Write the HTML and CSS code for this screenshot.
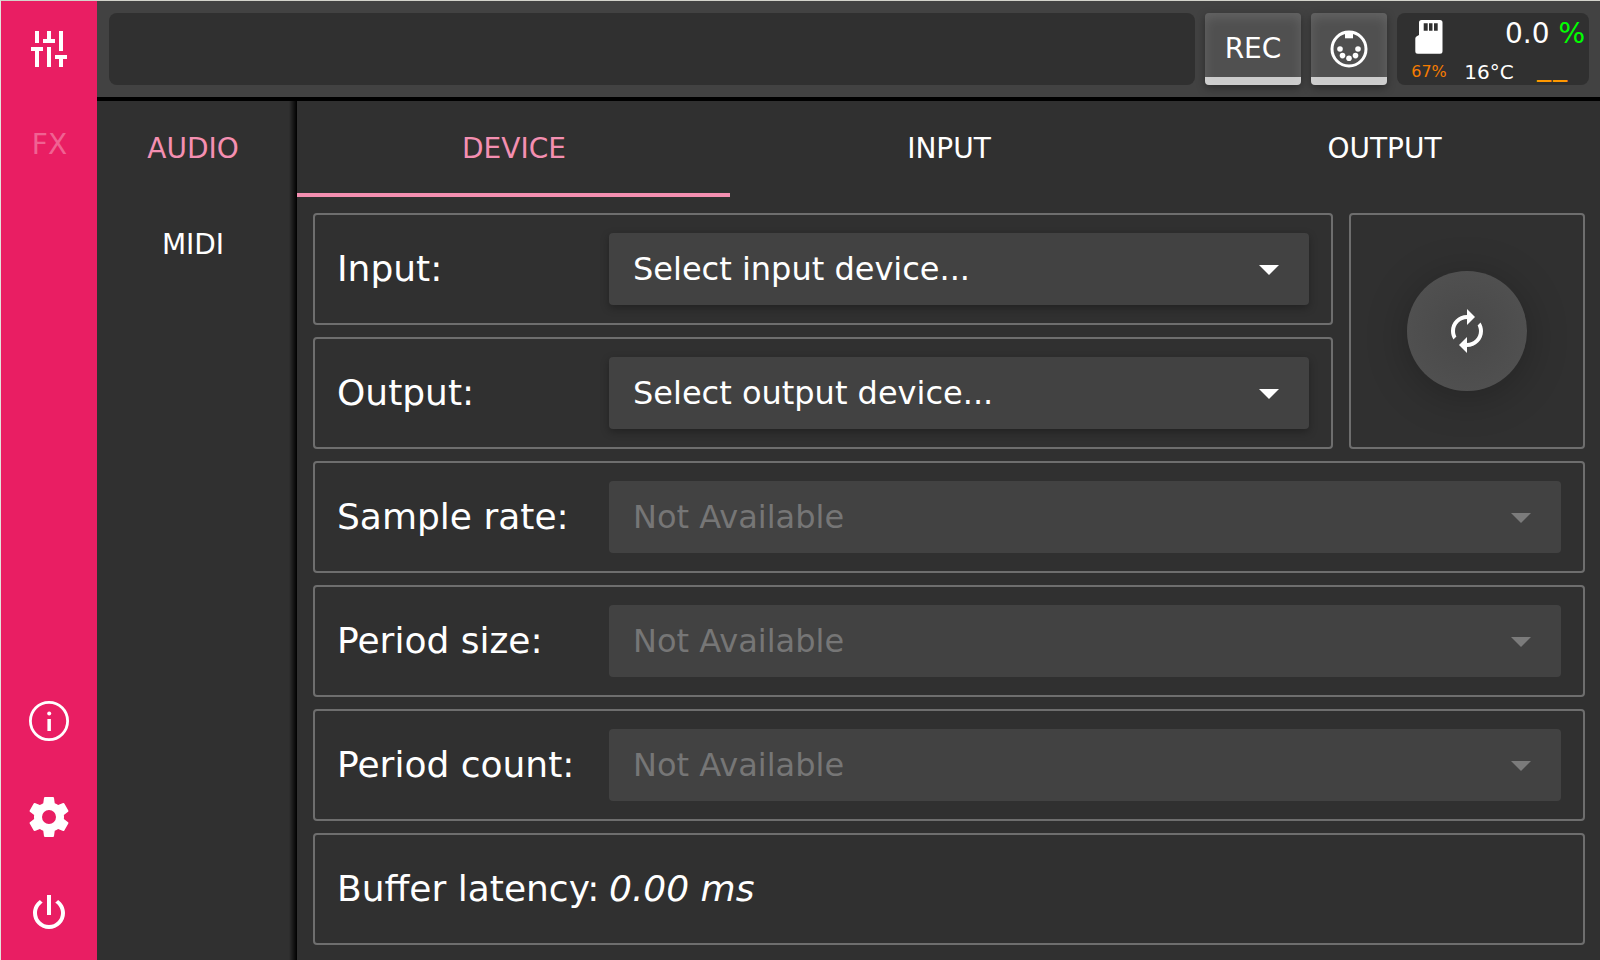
FILE: index.html
```html
<!DOCTYPE html>
<html lang="en">
<head>
<meta charset="utf-8">
<title>Audio settings</title>
<link rel="stylesheet" href="styles.css">
</head>
<body>
<div class="app">
  <nav class="rail">
    <button class="rail-item"><svg class="icon" viewBox="0 0 48 48"><path d="M10 6h4v12h-4zM22 6h4v8h4v4H18v-4h4zM34 6h4v20h-4zM6 22h12v4h-4v16h-4V26H6zM22 22h4v20h-4zM30 30h12v4h-4v8h-4v-8h-4z"/></svg></button>
    <button class="rail-item fx">FX</button>
    <div class="spacer"></div>
    <button class="rail-item"><svg class="icon" viewBox="0 0 48 48"><circle cx="24" cy="24" r="18.6" fill="none" stroke="#fff" stroke-width="2.8"/><circle cx="24.2" cy="16.5" r="2"/><path d="M22.4 22h3.5v12h-3.5z"/></svg></button>
    <button class="rail-item"><svg class="icon" viewBox="0 0 24 24"><path d="M19.43 12.98c.04-.32.07-.64.07-.98s-.03-.66-.07-.98l2.11-1.65c.19-.15.24-.42.12-.64l-2-3.46c-.12-.22-.39-.3-.61-.22l-2.49 1c-.52-.4-1.08-.73-1.69-.98l-.38-2.65C14.46 2.18 14.25 2 14 2h-4c-.25 0-.46.18-.49.42l-.38 2.65c-.61.25-1.17.59-1.69.98l-2.49-1c-.23-.09-.49 0-.61.22l-2 3.46c-.13.22-.07.49.12.64l2.11 1.65c-.04.32-.07.65-.07.98s.03.66.07.98l-2.11 1.65c-.19.15-.24.42-.12.64l2 3.46c.12.22.39.3.61.22l2.49-1c.52.4 1.08.73 1.69.98l.38 2.65c.03.24.24.42.49.42h4c.25 0 .46-.18.49-.42l.38-2.65c.61-.25 1.17-.59 1.69-.98l2.49 1c.23.09.49 0 .61-.22l2-3.46c.12-.22.07-.49-.12-.64l-2.11-1.65zM12 15.5a3.5 3.5 0 1 1 0-7 3.5 3.5 0 0 1 0 7z"/></svg></button>
    <button class="rail-item"><svg class="icon" viewBox="0 0 24 24"><path d="M16.56 5.44l-1.45 1.45C16.84 7.94 18 9.83 18 12a6 6 0 0 1-12 0c0-2.17 1.16-4.06 2.88-5.12L7.44 5.44C5.36 6.88 4 9.28 4 12a8 8 0 0 0 16 0c0-2.72-1.36-5.12-3.44-6.56M13 3h-2v10h2"/></svg></button>
  </nav>
  <div class="main">
    <header class="topbar">
      <div class="display"></div>
      <button class="key rec">REC</button>
      <button class="key midi"><svg class="icon" viewBox="0 0 48 48"><circle cx="24" cy="24" r="17" fill="none" stroke="#fff" stroke-width="3"/><path d="M20 7h8v6.3h-8z"/><circle cx="15" cy="24" r="2.8"/><circle cx="33" cy="24" r="2.8"/><circle cx="17.5" cy="30.6" r="2.8"/><circle cx="30.5" cy="30.6" r="2.8"/><circle cx="24" cy="33.3" r="2.8"/></svg></button>
      <div class="status">
        <div class="status-top">
          <svg class="sd" viewBox="0 0 28 34"><path fill-rule="evenodd" d="M6.500 0h18.500a2.500 2.500 0 0 1 2.500 2.500v28.700a2.500 2.500 0 0 1-2.500 2.500H2.800a2.500 2.500 0 0 1-2.500-2.500V18.500q0-1.500 1.500-2.200L4 15V2.500A2.500 2.500 0 0 1 6.500 0zM8.700 3.300v7.400h4V3.300zM14 3.300v7.400h3.500V3.300zM19 3.300v7.400h3.700V3.300z"/></svg>
          <div class="cpu">0.0 <span class="ok">%</span></div>
        </div>
        <div class="status-bottom">
          <span class="disk">67%</span><span class="temp">16°C</span><span class="xruns">__</span>
        </div>
      </div>
    </header>
    <div class="body">
      <nav class="side">
        <button class="side-item active">AUDIO</button>
        <button class="side-item">MIDI</button>
      </nav>
      <section class="page">
        <div class="tabs">
          <button class="tab active">DEVICE</button>
          <button class="tab">INPUT</button>
          <button class="tab">OUTPUT</button>
        </div>
        <div class="content">
          <div class="devices">
            <div class="stack">
              <div class="card"><label class="label">Input:</label><div class="combo">Select input device...<svg class="arrow" viewBox="0 0 20 10"><path d="M0 0h20L10 10z"/></svg></div></div>
              <div class="card"><label class="label">Output:</label><div class="combo">Select output device...<svg class="arrow" viewBox="0 0 20 10"><path d="M0 0h20L10 10z"/></svg></div></div>
            </div>
            <div class="card refresh-card"><button class="refresh"><svg class="icon" viewBox="0 0 24 24"><path d="M12 6v3l4-4-4-4v3c-4.42 0-8 3.58-8 8 0 1.57.46 3.03 1.24 4.26L6.7 14.8c-.45-.83-.7-1.79-.7-2.8 0-3.31 2.69-6 6-6zm6.76 1.74L17.3 9.2c.44.84.7 1.79.7 2.8 0 3.31-2.69 6-6 6v-3l-4 4 4 4v-3c4.42 0 8-3.58 8-8 0-1.57-.46-3.03-1.24-4.26z"/></svg></button></div>
          </div>
          <div class="card"><label class="label">Sample rate:</label><div class="combo disabled">Not Available<svg class="arrow" viewBox="0 0 20 10"><path d="M0 0h20L10 10z"/></svg></div></div>
          <div class="card"><label class="label">Period size:</label><div class="combo disabled">Not Available<svg class="arrow" viewBox="0 0 20 10"><path d="M0 0h20L10 10z"/></svg></div></div>
          <div class="card"><label class="label">Period count:</label><div class="combo disabled">Not Available<svg class="arrow" viewBox="0 0 20 10"><path d="M0 0h20L10 10z"/></svg></div></div>
          <div class="card"><label class="label">Buffer latency:</label><em class="value">0.00 ms</em></div>
        </div>
      </section>
    </div>
  </div>
</div>
</body>
</html>
```
FILE: styles.css
```css
* { box-sizing: border-box; }
html { overflow: hidden; }
body {
  margin: 0;
  color: #fff;
  background: #303030;
  font-family: "DejaVu Sans", sans-serif;
  font-size: 28px;
  line-height: 1;
  white-space: nowrap;
  overflow: hidden;
}
button {
  margin: 0;
  padding: 0;
  border: 0;
  background: none;
  color: inherit;
  font: inherit;
  display: flex;
  align-items: center;
  justify-content: center;
}
svg { display: block; fill: #fff; flex: none; }
.icon { width: 48px; height: 48px; }
.app {
  display: flex;
  width: 1600px;
  height: 961px;
  border-top: 1px solid #d3d3cb;
  border-left: 1px solid #e4e0dc;
}
.rail {
  display: flex;
  flex-direction: column;
  width: 96px;
  background: #e91e63;
}
.rail-item { height: 96px; }
.fx { padding-left: 1px; color: #f06292; }
.spacer { flex: 1; }
.main { flex: 1; display: flex; flex-direction: column; min-width: 0; }
.topbar {
  display: flex;
  height: 100px;
  padding: 12px 11px 12px 12px;
  background: #424242;
  border-bottom: 4px solid #000;
}
.display { width: 1086px; border-radius: 8px; background: #303030; margin-right: 10px; }
.key {
  height: 72px;
  margin-right: 10px;
  border-radius: 4px;
  background: linear-gradient(#505050 64px, #ccc 64px);
  box-shadow: inset 0 4px 12px rgba(255, 255, 255, .12), 0 3px 8px rgba(0, 0, 0, .35);
}
.rec { width: 96px; }
.midi { width: 76px; }
.status { width: 192px; border-radius: 8px; background: #303030; }
.status-top { display: flex; justify-content: space-between; height: 44px; padding: 7px 4px 0 18px; }
.sd { width: 28px; height: 34px; }
.ok { color: #0f0; }
.status-bottom {
  display: grid;
  grid-template-columns: 64px 56px 72px;
  grid-template-rows: 28px;
  align-items: center;
  text-align: center;
}
.disk { padding-top: 2px; font-size: 16px; color: #f57c00; }
.temp { padding-top: 2px; font-size: 20px; }
.xruns { margin-top: -10px; font-size: 28px; letter-spacing: 2px; color: #ff9800; }
.body { flex: 1; display: flex; }
.side {
  width: 200px;
  background: linear-gradient(to right, transparent 192px, #181818 196px, #000 200px);
}
.side-item { width: 192px; height: 96px; }
.active { color: #f48fb1; }
.page { flex: 1; }
.tabs { display: grid; grid-template-columns: repeat(3, 1fr); gap: 2px; height: 96px; }
.tab { padding-left: 1px; }
.tab:last-child { padding-left: 2px; }
.tab.active { box-shadow: inset 0 -4px #f48fb1; }
.content { display: flex; flex-direction: column; gap: 12px; padding: 16px 15px 15px 16px; }
.devices { display: flex; gap: 16px; }
.stack { flex: 1; display: flex; flex-direction: column; gap: 12px; }
.card {
  display: flex;
  align-items: center;
  height: 112px;
  padding: 0 22px;
  border: 2px solid #6e6e6e;
  border-radius: 4px;
}
.label { width: 272px; font-size: 36px; }
.value { font-size: 36px; }
.combo {
  flex: 1;
  display: flex;
  align-items: center;
  justify-content: space-between;
  height: 72px;
  padding: 0 30px 0 24px;
  border-radius: 4px;
  background: #424242;
  box-shadow: 0 3px 8px rgba(0, 0, 0, .3);
  font-size: 32px;
}
.disabled { color: #767676; box-shadow: none; }
.arrow { width: 20px; height: 10px; margin-top: 2px; }
.disabled .arrow { fill: #7b7b7b; }
.refresh-card { width: 236px; height: 236px; justify-content: center; }
.refresh {
  width: 120px;
  height: 120px;
  flex: none;
  border-radius: 50%;
  background: radial-gradient(circle, #484848, #535353 100%);
  box-shadow: 0 6px 40px rgba(0, 0, 0, .25);
}
```
